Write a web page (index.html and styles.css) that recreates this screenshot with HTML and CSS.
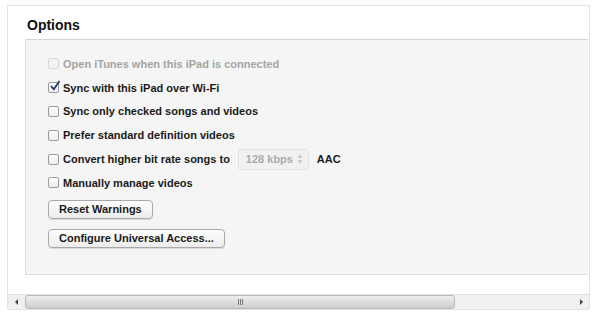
FILE: index.html
```html
<!DOCTYPE html>
<html lang="en">
<head>
    <meta charset="UTF-8">
    <title>Options</title>
    <link rel="stylesheet" href="styles.css">
</head>
<body>
    <div class="panel">
        <h1>Options</h1>

        <div class="group">
            <label class="row disabled"><span class="box"></span>Open iTunes when this iPad is connected</label>
            <label class="row"><span class="box checked"><svg viewBox="0 0 12 12" width="12" height="12"><path d="M2 6 L4.8 9.2 L10.5 1" fill="none" stroke="#1f3d73" stroke-width="1.8"/></svg></span>Sync with this iPad over Wi-Fi</label>
            <label class="row"><span class="box"></span>Sync only checked songs and videos</label>
            <label class="row"><span class="box"></span>Prefer standard definition videos</label>
            <label class="row"><span class="box"></span>Convert higher bit rate songs to
                <span class="select">128 kbps<svg class="arrows" viewBox="0 0 6 10" width="6" height="10"><path d="M3 0.5 L5.5 3.8 H0.5 Z M3 9.5 L5.5 6.2 H0.5 Z" fill="#c2c2c2"/></svg></span>
                <span class="aac">AAC</span>
            </label>
            <label class="row"><span class="box"></span>Manually manage videos</label>

            <div class="buttons">
                <button>Reset Warnings</button>
                <button>Configure Universal Access...</button>
            </div>
        </div>

        <!-- horizontal scroll bar -->
        <div class="scrollbar">
            <span class="arrow left"></span>
            <div class="track">
                <div class="thumb">
                    <span class="grip"><i></i><i></i><i></i></span>
                </div>
            </div>
            <span class="arrow right"></span>
        </div>
    </div>
</body>
</html>
```

FILE: styles.css
```css
/* iTunes options pane */
body {
    margin: 0;
    background-color: #fff;
    font-family: 'Liberation Sans', Arial, sans-serif;
    color: #1a1a1a;
}
.panel {
    margin: 5px 10px 4px 7px;
    height: 305px;
    border: 1px solid #e4e4e4;
    box-sizing: border-box;
    padding-left: 17px;
    display: flex;
    flex-direction: column;
}
h1 {
    font-size: 14px;
    font-weight: bold;
    margin: 11px 0 0 2px;
    height: 22px;
    flex-shrink: 0;
    color: #111;
}
.group {
    margin-right: 1px;
    height: 236px;
    flex-shrink: 0;
    box-sizing: border-box;
    background-color: #f5f5f5;
    border-top: 1px solid #d4d4d4;
    border-left: 1px solid #dcdcdc;
    border-bottom: 1px solid #dcdcdc;
    padding: 12px 0 0 22px;
}
.row {
    display: flex;
    align-items: center;
    height: 23.8px;
    font-size: 11px;
    font-weight: bold;
}
.row.disabled {
    color: #a4a4a4;
}
.box {
    width: 9px;
    height: 9px;
    border: 1px solid #9c9c9c;
    border-radius: 2px;
    background: linear-gradient(#fff, #ececec);
    margin-right: 4px;
    position: relative;
}
.disabled .box {
    border-color: #d6d6d6;
    background: #f2f2f2;
}
.box svg {
    position: absolute;
    left: 0;
    top: -3px;
}
.select {
    display: inline-flex;
    align-items: center;
    justify-content: space-between;
    height: 19px;
    width: 57px;
    margin-left: 8px;
    padding: 0 5px 0 7px;
    border: 1px solid #e2e2e2;
    border-radius: 3px;
    background-color: #f1f1f1;
    color: #ababab;
    font-weight: bold;
}
.aac {
    margin-left: 8px;
}
.buttons {
    display: flex;
    flex-direction: column;
    align-items: flex-start;
    gap: 10px;
    margin-top: 5px;
}
button {
    font-family: 'Liberation Sans', Arial, sans-serif;
    font-size: 11px;
    font-weight: bold;
    color: #1a1a1a;
    height: 19px;
    padding: 0 10px;
    border: 1px solid #a9a9a9;
    border-radius: 4px;
    background: linear-gradient(#fdfdfd, #ececec);
    box-shadow: 0 1px 1px rgba(0,0,0,0.12);
}
.scrollbar {
    margin-top: 19px;
    margin-left: -17px;
    height: 14px;
    flex-shrink: 0;
    display: flex;
    align-items: stretch;
    border-top: 1px solid #e0e0e0;
    background-color: #f0f0f0;
}
.arrow {
    width: 17px;
    position: relative;
}
.arrow::after {
    content: '';
    position: absolute;
    top: 4px;
    border-top: 3px solid transparent;
    border-bottom: 3px solid transparent;
}
.arrow.left::after {
    left: 7px;
    border-right: 3px solid #444;
}
.arrow.right::after {
    left: 8px;
    border-left: 3px solid #444;
}
.track {
    flex: 1;
}
.thumb {
    width: 430px;
    height: 100%;
    box-sizing: border-box;
    border: 1px solid #b8b8b8;
    border-radius: 3px;
    background: linear-gradient(#ededed, #dadada 60%, #cdcdcd);
    display: flex;
    align-items: center;
    justify-content: center;
}
.grip {
    display: flex;
    gap: 1px;
}
.grip i {
    width: 1px;
    height: 6px;
    background-color: #777;
}
```
